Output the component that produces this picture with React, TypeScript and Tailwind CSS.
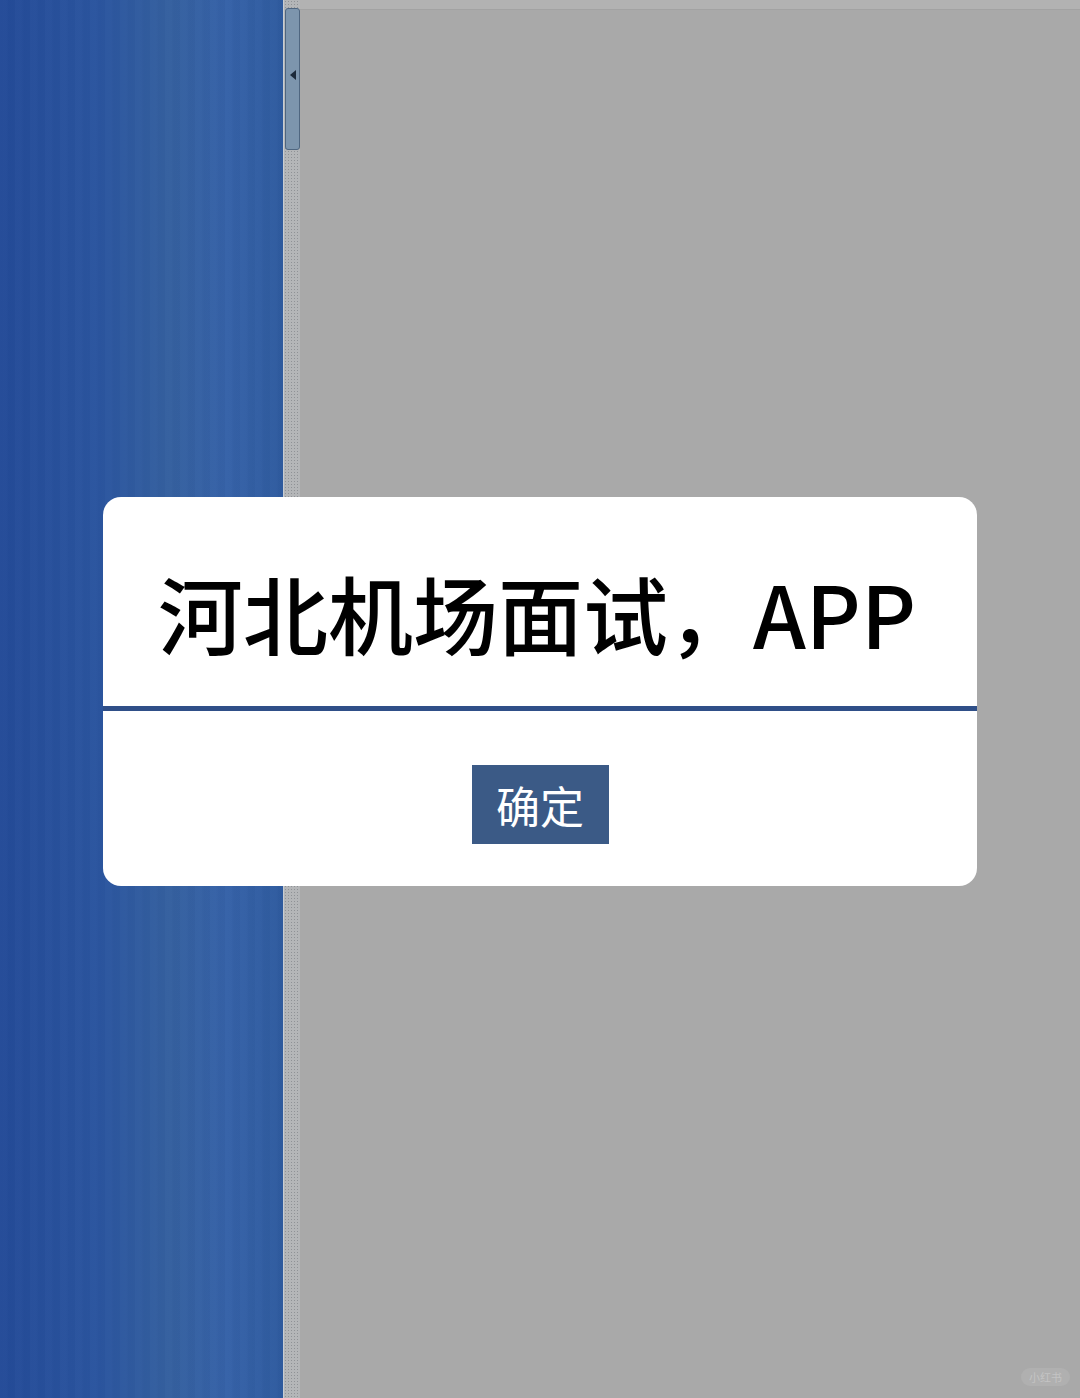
import React from "react";

const cjk = { fontFamily: '"Noto Sans CJK SC", "Noto Sans", sans-serif' };

function Splitter() {
  return (
    <div className="relative w-[17px] shrink-0 bg-[#b4b6b8] bg-[radial-gradient(circle,#8f9296_0.8px,transparent_1px)] bg-[length:3px_3px] border-l border-[#c9cdd2]">
      {/* collapse handle */}
      <div className="absolute left-[1px] top-[8px] w-[15px] h-[142px] rounded-[3px] border border-[#4f6680] bg-[#7d95ad] flex items-center justify-center">
        <svg width="8" height="12" viewBox="0 0 8 12" className="-mt-[8px]">
          <path d="M7 1 L1 6 L7 11 Z" fill="#1d2a3a" />
        </svg>
      </div>
    </div>
  );
}

export default function App() {
  return (
    <div className="relative w-[1080px] h-[1398px] flex overflow-hidden" style={cjk}>
      {/* left blue panel */}
      <div className="w-[283px] shrink-0 bg-[linear-gradient(90deg,#244b98_0%,#2b559f_35%,#35609f_60%,#3662a8_80%,#2f5b9f_100%)]">
        <div className="w-full h-full bg-[repeating-linear-gradient(90deg,rgba(255,255,255,0.012)_0px,rgba(255,255,255,0.012)_6px,rgba(0,0,0,0.015)_9px,rgba(0,0,0,0.015)_15px)]" />
      </div>

      <Splitter />

      {/* grey workspace */}
      <div className="flex-1 flex flex-col bg-[#a9a9a9]">
        <div className="h-[10px] bg-[#b2b2b2] border-b border-[#a2a2a2]" />
        <div className="flex-1" />
        <div className="flex justify-end pr-[10px] pb-[12px]">
          <span className="rounded-full bg-[#b0b0b0] px-[8px] py-[1px] text-[11px] text-[#c4c4c4]">
            小红书
          </span>
        </div>
      </div>

      {/* modal dialog */}
      <div className="absolute left-[103px] top-[497px] w-[874px] h-[389px] bg-white rounded-[18px] flex flex-col overflow-hidden">
        <div className="h-[209px] flex items-center justify-center pt-[20px] pr-[6px]">
          <h1 className="text-[85px] leading-none font-medium text-black">
            河北机场面试，APP
          </h1>
        </div>
        <div className="h-[5px] bg-[#2f4f88]" />
        <div className="flex-1 flex justify-center pt-[54px]">
          <button className="w-[137px] h-[79px] bg-[#3b5a86] text-white text-[44px] leading-none flex items-center justify-center">
            确定
          </button>
        </div>
      </div>
    </div>
  );
}
